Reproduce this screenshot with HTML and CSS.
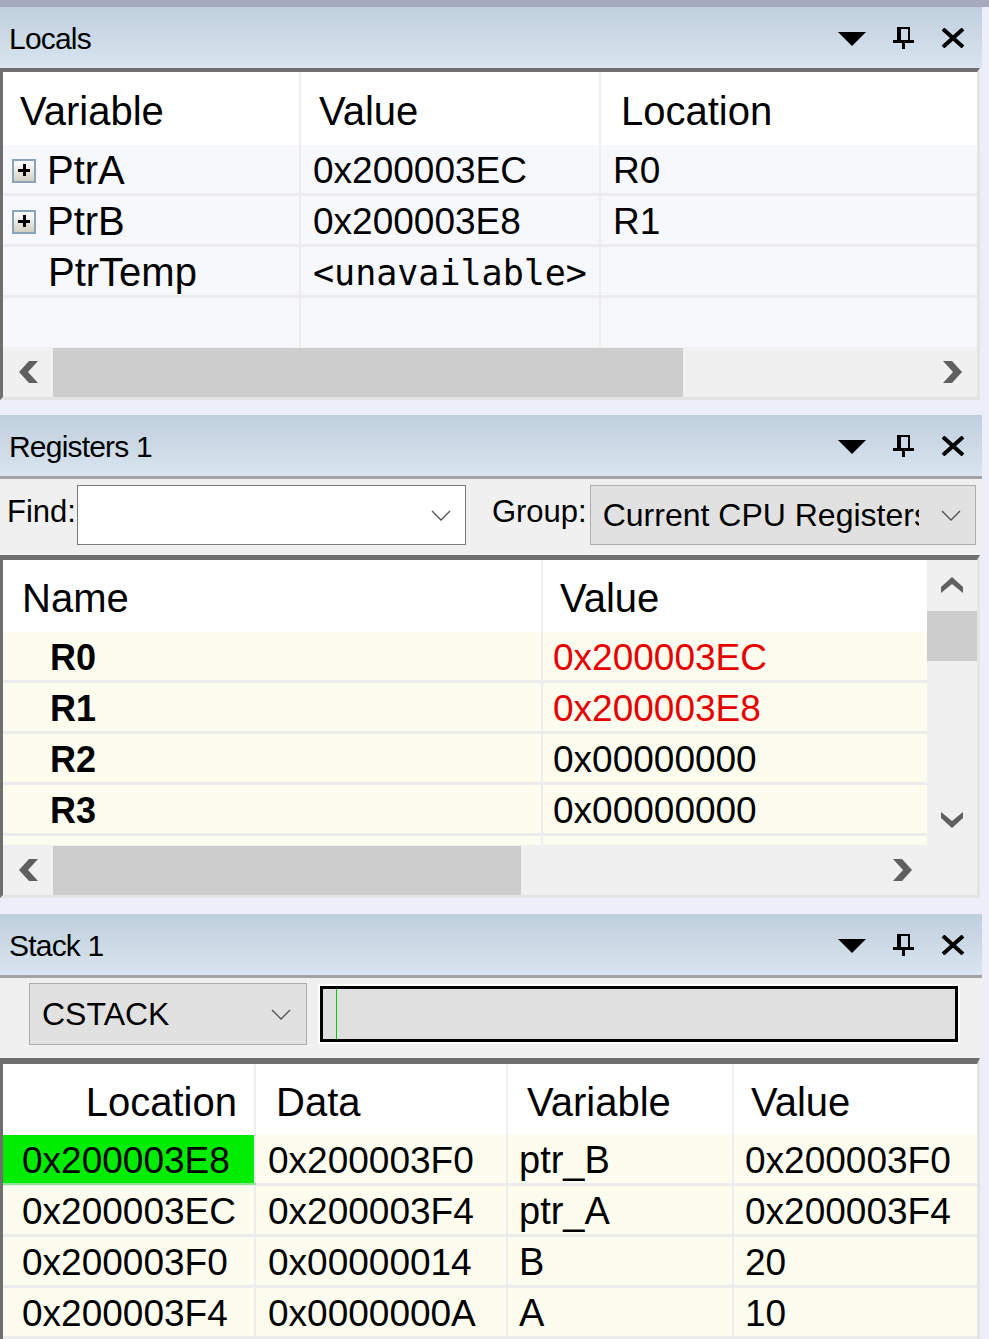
FILE: index.html
```html
<!DOCTYPE html>
<html>
<head>
<meta charset="utf-8">
<title>Debug windows</title>
<link rel="stylesheet" href="styles.css">
</head>
<body>
<div class="topstrip"></div>

<section class="panel">
  <header class="titlebar">
    <span class="title">Locals</span>
    <span class="ticons">
      <svg class="ic-tri" width="28" height="14" viewBox="0 0 28 14"><polygon points="0,0 28,0 14,14" fill="#000"/></svg>
      <svg class="ic-pin" width="21" height="22" viewBox="0 0 21 22"><rect x="4" y="0" width="4" height="14"/><rect x="4" y="0" width="13" height="2"/><rect x="15" y="0" width="2" height="14"/><rect x="0" y="13" width="21" height="3"/><rect x="9" y="15" width="3" height="7"/></svg>
      <svg class="ic-x" width="24" height="20" viewBox="0 0 24 20"><path d="M2 1 L22 19 M22 1 L2 19" stroke="#000" stroke-width="4"/></svg>
    </span>
  </header>
  <div class="listbox lb-locals">
    <div class="lrow lhead">
      <div class="lc lc1 hc">Variable</div>
      <div class="lc lc2 hc">Value</div>
      <div class="lc lc3 hc">Location</div>
    </div>
    <div class="lrow ldata">
      <div class="lc lc1 namecell"><span class="plus"></span><span class="nm">PtrA</span></div>
      <div class="lc lc2 hex">0x200003EC</div>
      <div class="lc lc3 hex">R0</div>
    </div>
    <div class="lrow ldata">
      <div class="lc lc1 namecell"><span class="plus"></span><span class="nm">PtrB</span></div>
      <div class="lc lc2 hex">0x200003E8</div>
      <div class="lc lc3 hex">R1</div>
    </div>
    <div class="lrow ldata">
      <div class="lc lc1 namecell noplus"><span class="nm">PtrTemp</span></div>
      <div class="lc lc2 mono">&lt;unavailable&gt;</div>
      <div class="lc lc3"></div>
    </div>
    <div class="lrow ldata lastrow">
      <div class="lc lc1"></div>
      <div class="lc lc2"></div>
      <div class="lc lc3"></div>
    </div>
    <div class="hscroll">
      <div class="hbtn"><svg width="19" height="22" viewBox="0 0 19 22"><polygon points="19,0 10,0 0,11 10,22 19,22 9,11" fill="#606060"/></svg></div>
      <div class="hthumb thumb-locals"></div>
      <div class="hfill"></div>
      <div class="hbtn"><svg width="19" height="22" viewBox="0 0 19 22"><polygon points="0,0 9,0 19,11 9,22 0,22 10,11" fill="#606060"/></svg></div>
    </div>
  </div>
</section>

<section class="panel panel-next">
  <header class="titlebar">
    <span class="title">Registers 1</span>
    <span class="ticons">
      <svg class="ic-tri" width="28" height="14" viewBox="0 0 28 14"><polygon points="0,0 28,0 14,14" fill="#000"/></svg>
      <svg class="ic-pin" width="21" height="22" viewBox="0 0 21 22"><rect x="4" y="0" width="4" height="14"/><rect x="4" y="0" width="13" height="2"/><rect x="15" y="0" width="2" height="14"/><rect x="0" y="13" width="21" height="3"/><rect x="9" y="15" width="3" height="7"/></svg>
      <svg class="ic-x" width="24" height="20" viewBox="0 0 24 20"><path d="M2 1 L22 19 M22 1 L2 19" stroke="#000" stroke-width="4"/></svg>
    </span>
  </header>
  <div class="toolbar tb-regs">
    <span class="lbl">Find:</span>
    <div class="combo combo-find">
      <span class="ctext"></span>
      <svg class="chev" width="20" height="11" viewBox="0 0 20 11"><polyline points="1,1 10,10 19,1" fill="none" stroke="#505050" stroke-width="1.3"/></svg>
    </div>
    <span class="lbl lbl-group">Group:</span>
    <div class="combo combo-group">
      <span class="ctext">Current CPU Registers</span>
      <svg class="chev" width="20" height="11" viewBox="0 0 20 11"><polyline points="1,1 10,10 19,1" fill="none" stroke="#505050" stroke-width="1.3"/></svg>
    </div>
  </div>
  <div class="listbox lb-regs">
    <div class="regbody">
      <div class="regtable">
        <div class="lrow rhead">
          <div class="rc rc1 hc">Name</div>
          <div class="rc rc2 hc">Value</div>
        </div>
        <div class="rrows">
          <div class="lrow rrow"><div class="rc rc1 reg">R0</div><div class="rc rc2 hex changed">0x200003EC</div></div>
          <div class="lrow rrow"><div class="rc rc1 reg">R1</div><div class="rc rc2 hex changed">0x200003E8</div></div>
          <div class="lrow rrow"><div class="rc rc1 reg">R2</div><div class="rc rc2 hex">0x00000000</div></div>
          <div class="lrow rrow"><div class="rc rc1 reg">R3</div><div class="rc rc2 hex">0x00000000</div></div>
          <div class="lrow rrow"><div class="rc rc1 reg"></div><div class="rc rc2 hex"></div></div>
        </div>
      </div>
      <div class="vscroll">
        <div class="vbtn"><svg width="22" height="16" viewBox="0 0 22 16"><polygon points="0,16 0,10 11,0 22,10 22,16 11,7" fill="#606060"/></svg></div>
        <div class="vthumb"></div>
        <div class="vfill"></div>
        <div class="vbtn"><svg width="22" height="16" viewBox="0 0 22 16"><polygon points="0,0 0,6 11,16 22,6 22,0 11,9" fill="#606060"/></svg></div>
      </div>
    </div>
    <div class="hscroll">
      <div class="hbtn"><svg width="19" height="22" viewBox="0 0 19 22"><polygon points="19,0 10,0 0,11 10,22 19,22 9,11" fill="#606060"/></svg></div>
      <div class="hthumb thumb-regs"></div>
      <div class="hfill"></div>
      <div class="hbtn"><svg width="19" height="22" viewBox="0 0 19 22"><polygon points="0,0 9,0 19,11 9,22 0,22 10,11" fill="#606060"/></svg></div>
      <div class="hcorner"></div>
    </div>
  </div>
</section>

<section class="panel panel-next2">
  <header class="titlebar">
    <span class="title">Stack 1</span>
    <span class="ticons">
      <svg class="ic-tri" width="28" height="14" viewBox="0 0 28 14"><polygon points="0,0 28,0 14,14" fill="#000"/></svg>
      <svg class="ic-pin" width="21" height="22" viewBox="0 0 21 22"><rect x="4" y="0" width="4" height="14"/><rect x="4" y="0" width="13" height="2"/><rect x="15" y="0" width="2" height="14"/><rect x="0" y="13" width="21" height="3"/><rect x="9" y="15" width="3" height="7"/></svg>
      <svg class="ic-x" width="24" height="20" viewBox="0 0 24 20"><path d="M2 1 L22 19 M22 1 L2 19" stroke="#000" stroke-width="4"/></svg>
    </span>
  </header>
  <div class="toolbar tb-stack">
    <div class="combo combo-stack">
      <span class="ctext">CSTACK</span>
      <svg class="chev" width="20" height="11" viewBox="0 0 20 11"><polyline points="1,1 10,10 19,1" fill="none" stroke="#505050" stroke-width="1.3"/></svg>
    </div>
    <div class="stackbar"><div class="stackbar-inner"><span class="sp-mark"></span></div></div>
  </div>
  <div class="listbox lb-stack">
    <div class="lrow shead">
      <div class="sc sc1 hc right">Location</div>
      <div class="sc sc2 hc">Data</div>
      <div class="sc sc3 hc">Variable</div>
      <div class="sc sc4 hc">Value</div>
    </div>
    <div class="lrow srow">
      <div class="sc sc1 hex cur">0x200003E8</div>
      <div class="sc sc2 hex">0x200003F0</div>
      <div class="sc sc3 var">ptr_B</div>
      <div class="sc sc4 hex">0x200003F0</div>
    </div>
    <div class="lrow srow">
      <div class="sc sc1 hex">0x200003EC</div>
      <div class="sc sc2 hex">0x200003F4</div>
      <div class="sc sc3 var">ptr_A</div>
      <div class="sc sc4 hex">0x200003F4</div>
    </div>
    <div class="lrow srow">
      <div class="sc sc1 hex">0x200003F0</div>
      <div class="sc sc2 hex">0x00000014</div>
      <div class="sc sc3 var">B</div>
      <div class="sc sc4 hex">20</div>
    </div>
    <div class="lrow srow">
      <div class="sc sc1 hex">0x200003F4</div>
      <div class="sc sc2 hex">0x0000000A</div>
      <div class="sc sc3 var">A</div>
      <div class="sc sc4 hex">10</div>
    </div>
  </div>
</section>
</body>
</html>
```

FILE: styles.css
```css
html, body {
  margin: 0;
  padding: 0;
}
body {
  width: 989px;
  height: 1339px;
  overflow: hidden;
  background: #eceef9;
  font-family: "Liberation Sans", Arial, sans-serif;
  color: #000;
}

.topstrip {
  height: 7px;
  background: #a7a9bc;
}

.panel {
  width: 982px;
}
.panel-next {
  margin-top: 15px;
}
.panel-next2 {
  margin-top: 16px;
}

/* title bar */
.titlebar {
  height: 61px;
  box-sizing: border-box;
  display: flex;
  align-items: center;
  justify-content: space-between;
  padding: 0 17px 0 9px;
  background: linear-gradient(#bfcfdc, #d9e5f0);
}
.title {
  font-size: 30px;
  letter-spacing: -0.8px;
  padding-top: 2px;
}
.ticons {
  display: flex;
  align-items: center;
  gap: 27px;
}
.ic-tri {
  margin-top: 3px;
}
.ic-pin {
  fill: #000;
}

/* list boxes */
.listbox {
  width: 980px;
  box-sizing: border-box;
  border-left: 3px solid #6f6f6f;
  border-right: 3px solid #e4e4e4;
  background: #fff;
}
.lb-locals {
  border-top: 4px solid #6f6f6f;
  border-bottom: 3px solid #e4e4e4;
}
.lb-regs {
  border-top: 5px solid #6f6f6f;
  border-bottom: 3px solid #e4e4e4;
}
.lb-stack {
  border-top: 6px solid #6f6f6f;
}

.lrow {
  display: flex;
}
.hc {
  font-size: 40px;
  padding-top: 5px;
}
.lc, .rc, .sc {
  display: flex;
  align-items: center;
  box-sizing: border-box;
  white-space: nowrap;
  overflow: hidden;
}
.ldata .lc, .rrow .rc, .srow .sc {
  padding-top: 3px;
}

.hex {
  font-size: 37px;
}
.nm {
  font-size: 40px;
}
.mono {
  font-family: "DejaVu Sans Mono", "Liberation Mono", monospace;
  font-size: 35px;
}

/* locals */
.lhead {
  height: 73px;
  background: #fff;
}
.ldata {
  height: 51px;
  box-sizing: border-box;
  border-bottom: 3px solid #ececf0;
  background: #f6f8fc;
}
.ldata.lastrow {
  height: 49px;
  border-bottom: 0;
}
.lc1 {
  width: 298px;
  border-right: 2px solid #ececec;
}
.lc2 {
  width: 300px;
  border-right: 2px solid #ececec;
}
.lc3 {
  flex: 1;
}
.lhead .lc1 { padding-left: 17px; border-right-color: #f0f0f0; }
.lhead .lc2 { padding-left: 18px; border-right-color: #f0f0f0; }
.lhead .lc3 { padding-left: 20px; }
.ldata .lc2, .ldata .lc3 { padding-left: 12px; }
.ldata .namecell {
  padding-left: 9px;
  gap: 11px;
}
.ldata .namecell.noplus {
  padding-left: 45px;
}
.plus {
  position: relative;
  width: 24px;
  height: 24px;
  box-sizing: border-box;
  border: 2px solid #8aa3bd;
  background: linear-gradient(#ffffff, #d3cfc0);
  flex: none;
}
.plus::before,
.plus::after {
  content: "";
  position: absolute;
  background: #000;
}
.plus::before {
  left: 4px;
  top: 8px;
  width: 12px;
  height: 3px;
}
.plus::after {
  left: 8.5px;
  top: 3.5px;
  width: 3px;
  height: 12px;
}

/* scrollbars */
.hscroll {
  display: flex;
  height: 50px;
  background: #f0f0f0;
}
.hbtn {
  width: 50px;
  flex: none;
  display: flex;
  align-items: center;
  justify-content: center;
}
.hthumb {
  background: #cdcdcd;
  flex: none;
  margin-top: 1px;
}
.thumb-locals { width: 630px; }
.thumb-regs { width: 468px; }
.hfill { flex: 1; }
.hcorner { width: 50px; flex: none; }

.vscroll {
  width: 50px;
  flex: none;
  display: flex;
  flex-direction: column;
  background: #f0f0f0;
}
.vbtn {
  height: 50px;
  flex: none;
  display: flex;
  align-items: center;
  justify-content: center;
}
.vthumb {
  height: 50px;
  margin-top: 1px;
  flex: none;
  background: #cdcdcd;
}
.vfill { flex: 1; }

/* toolbars */
.toolbar {
  display: flex;
  align-items: flex-start;
  background: #f0f0f0;
  border-top: 3px solid #a3a3a3;
}
.tb-regs {
  height: 70px;
  padding: 6px 0 0 7px;
}
.tb-stack {
  height: 75px;
  padding: 5px 0 0 29px;
}
.lbl {
  height: 60px;
  box-sizing: border-box;
  display: flex;
  align-items: center;
  padding-bottom: 6px;
  font-size: 31px;
}
.lbl-group {
  margin-left: 26px;
}
.combo {
  height: 60px;
  box-sizing: border-box;
  display: flex;
  align-items: center;
}
.ctext {
  flex: 1;
  overflow: hidden;
  white-space: nowrap;
  font-size: 31px;
}
.chev {
  flex: none;
}
.combo-find {
  width: 389px;
  margin-left: 1px;
  background: #fff;
  border: 1px solid #7a7a7a;
  padding-right: 14px;
}
.combo-group {
  width: 386px;
  margin-left: 3px;
  background: #e1e1e1;
  border: 1px solid #adadad;
  padding: 0 14px 0 12px;
}
.combo-group .ctext {
  font-size: 32px;
}
.combo-group .chev {
  margin-left: 22px;
}
.combo-stack {
  width: 278px;
  height: 62px;
  background: #e1e1e1;
  border: 1px solid #adadad;
  padding: 0 15px 0 12px;
}
.combo-stack .ctext {
  font-size: 32px;
}
.stackbar {
  margin-left: 11px;
  margin-top: 1px;
  width: 642px;
  height: 60px;
  box-sizing: border-box;
  padding: 2px;
  background: #fff;
}
.stackbar-inner {
  height: 100%;
  box-sizing: border-box;
  border: 3px solid #000;
  background: #e0e0e0;
  padding-left: 13px;
}
.sp-mark {
  display: block;
  width: 1px;
  height: 100%;
  background: #00d000;
}

/* registers */
.regbody {
  display: flex;
  height: 285px;
}
.regtable {
  width: 924px;
  flex: none;
}
.rhead {
  height: 72px;
  background: #fff;
}
.rrows {
  height: 213px;
  overflow: hidden;
}
.rrow {
  height: 51px;
  flex: none;
  box-sizing: border-box;
  border-bottom: 3px solid #ececec;
  background: #fdfdef;
}
.rc1 {
  width: 540px;
  border-right: 2px solid #ececec;
}
.rc2 {
  flex: 1;
}
.rhead .rc1 { padding-left: 19px; border-right-color: #f0f0f0; }
.rhead .rc2 { padding-left: 17px; }
.rrow .rc1 { padding-left: 47px; }
.rrow .rc2 { padding-left: 10px; }
.reg {
  font-size: 36px;
  font-weight: bold;
}
.changed {
  color: #e60000;
}

/* stack */
.shead {
  height: 71px;
  background: #fff;
}
.srow {
  height: 51px;
  box-sizing: border-box;
  border-bottom: 3px solid #ececec;
  background: #fdfdef;
}
.sc1 {
  width: 253px;
  border-right: 2px solid #ececec;
}
.sc2 {
  width: 252px;
  border-right: 2px solid #ececec;
}
.sc3 {
  width: 226px;
  border-right: 2px solid #ececec;
}
.sc4 {
  flex: 1;
}
.shead .sc { border-right-color: #f0f0f0; }
.shead .sc1.right {
  justify-content: flex-end;
  padding-right: 17px;
}
.shead .sc2 { padding-left: 20px; }
.shead .sc3 { padding-left: 19px; }
.shead .sc4 { padding-left: 17px; }
.srow .sc1 { padding-left: 19px; }
.srow .sc2 { padding-left: 12px; }
.srow .sc3 { padding-left: 11px; }
.srow .sc4 { padding-left: 11px; }
.var {
  font-size: 38px;
}
.sc1.cur {
  background: #00ec00;
  box-shadow: 0 2px 0 #8fe08f;
}
```
